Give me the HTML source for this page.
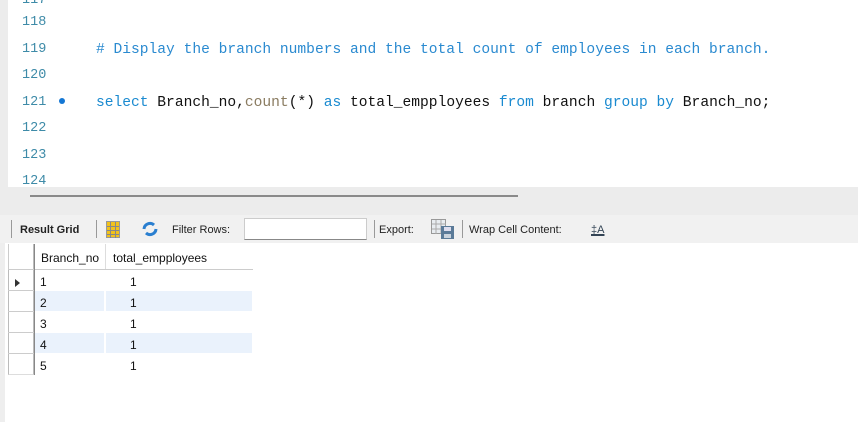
<!DOCTYPE html>
<html><head><style>
body{margin:0;width:858px;height:422px;overflow:hidden;background:#fff;position:relative;font-family:"Liberation Sans",sans-serif}
.abs{position:absolute}
.ln{position:absolute;left:22px;font:13.5px "Liberation Mono",monospace;color:#3e8ba8}
.code{position:absolute;left:96px;font:14.6px "Liberation Mono",monospace;white-space:pre;color:#111}
.kw{color:#1a8ad0}.fn{color:#8a7b60}.cm{color:#2a8ad0}
.tb{position:absolute;top:224px;font-size:11px;color:#222}
.cell{position:absolute;font-size:12px;color:#111}
</style></head><body>
<div class="abs" style="left:0;top:0;width:8px;height:187px;background:#ececec"></div>
<div class="ln" style="top:-7px">117</div>
<div class="ln" style="top:15px">118</div>
<div class="ln" style="top:42px">119</div>
<div class="ln" style="top:68px">120</div>
<div class="ln" style="top:95px">121</div>
<div class="abs" style="left:59px;top:98px;width:6px;height:6px;border-radius:50%;background:#1477d4"></div>
<div class="ln" style="top:121px">122</div>
<div class="ln" style="top:148px">123</div>
<div class="ln" style="top:174px">124</div>
<div class="code cm" style="top:42px"># Display the branch numbers and the total count of employees in each branch.</div>
<div class="code" style="top:95px"><span class="kw">select</span> Branch_no,<span class="fn">count</span>(*) <span class="kw">as</span> total_empployees <span class="kw">from</span> branch <span class="kw">group</span> <span class="kw">by</span> Branch_no;</div>
<div class="abs" style="left:0;top:187px;width:858px;height:28px;background:#ececec"></div>
<div class="abs" style="left:30px;top:195px;width:488px;height:2px;background:#8a8a8a"></div>
<div class="abs" style="left:0;top:215px;width:858px;height:28px;background:#f1f1f1"></div>
<div class="abs" style="left:11px;top:220px;width:1px;height:18px;background:#999"></div>
<div class="tb" style="left:20px;font-weight:bold">Result Grid</div>
<div class="abs" style="left:96px;top:220px;width:1px;height:18px;background:#999"></div>
<svg class="abs" style="left:106px;top:221px" width="14" height="17"><rect x="0.5" y="0.5" width="13" height="16" fill="#f2c21a" stroke="#999"/><path d="M4.5 1v16M9.5 1v16M1 5.5h12M1 9.5h12M1 13.5h12" stroke="#888" stroke-width="1"/></svg>
<svg class="abs" style="left:141px;top:221px" width="18" height="16"><path d="M3 8a6 6 0 0 1 10-4" stroke="#2a7fd0" stroke-width="3" fill="none"/><path d="M15 8a6 6 0 0 1-10 4" stroke="#2a7fd0" stroke-width="3" fill="none"/></svg>
<div class="tb" style="left:172px">Filter Rows:</div>
<div class="abs" style="left:244px;top:218px;width:123px;height:22px;background:#fff;border:1px solid #ccc;border-bottom-color:#888;box-sizing:border-box"></div>
<div class="abs" style="left:374px;top:220px;width:1px;height:18px;background:#999"></div>
<div class="tb" style="left:379px">Export:</div>
<svg class="abs" style="left:431px;top:219px" width="24" height="21"><rect x="0.5" y="0.5" width="14" height="14" fill="#e8ecf0" stroke="#999"/><path d="M5 1v14M10 1v14M1 5h14M1 10h14" stroke="#aaa"/><rect x="10" y="7" width="13" height="13" fill="#5a7a98"/><rect x="13" y="8" width="7" height="4" fill="#dde"/><rect x="13" y="15" width="7" height="4" fill="#c9d3dd"/></svg>
<div class="abs" style="left:462px;top:220px;width:1px;height:18px;background:#999"></div>
<div class="tb" style="left:469px">Wrap Cell Content:</div>
<div class="tb" style="left:591px;text-decoration:underline;text-decoration-thickness:2px;color:#345">‡A</div>
<div class="abs" style="left:0;top:243px;width:5px;height:179px;background:#eee"></div>
<div class="abs" style="left:8px;top:244px;width:26px;height:131px;border:1px solid #bbb;border-top:none;border-bottom-color:#ddd;box-sizing:border-box"></div>
<div class="abs" style="left:8px;top:244px;width:244px;height:25px;border-bottom:1px solid #ccc;border-left:1px solid #ccc"></div>
<div class="abs" style="left:105px;top:244px;width:1px;height:25px;background:#ddd"></div>
<div class="abs" style="left:34px;top:244px;width:1px;height:131px;background:#888"></div>
<div class="abs" style="left:8px;top:290px;width:26px;height:1px;background:#ccc"></div>
<div class="abs" style="left:8px;top:311px;width:26px;height:1px;background:#ccc"></div>
<div class="abs" style="left:8px;top:332px;width:26px;height:1px;background:#ccc"></div>
<div class="abs" style="left:8px;top:353px;width:26px;height:1px;background:#ccc"></div>
<div class="cell" style="left:41px;top:251px">Branch_no</div>
<div class="cell" style="left:113px;top:251px">total_empployees</div>
<div class="abs" style="left:15px;top:279px;width:0;height:0;border-left:5px solid #333;border-top:4px solid transparent;border-bottom:4px solid transparent"></div>
<div class="abs" style="left:35px;top:291px;width:217px;height:20px;background:#eaf2fc"></div>
<div class="abs" style="left:35px;top:333px;width:217px;height:20px;background:#eaf2fc"></div>
<div class="abs" style="left:104px;top:291px;width:2px;height:20px;background:#fff"></div>
<div class="abs" style="left:104px;top:333px;width:2px;height:20px;background:#fff"></div>
<div class="cell" style="left:40px;top:275px">1</div><div class="cell" style="left:130px;top:275px">1</div>
<div class="cell" style="left:40px;top:296px">2</div><div class="cell" style="left:130px;top:296px">1</div>
<div class="cell" style="left:40px;top:317px">3</div><div class="cell" style="left:130px;top:317px">1</div>
<div class="cell" style="left:40px;top:338px">4</div><div class="cell" style="left:130px;top:338px">1</div>
<div class="cell" style="left:40px;top:359px">5</div><div class="cell" style="left:130px;top:359px">1</div>
</body></html>
